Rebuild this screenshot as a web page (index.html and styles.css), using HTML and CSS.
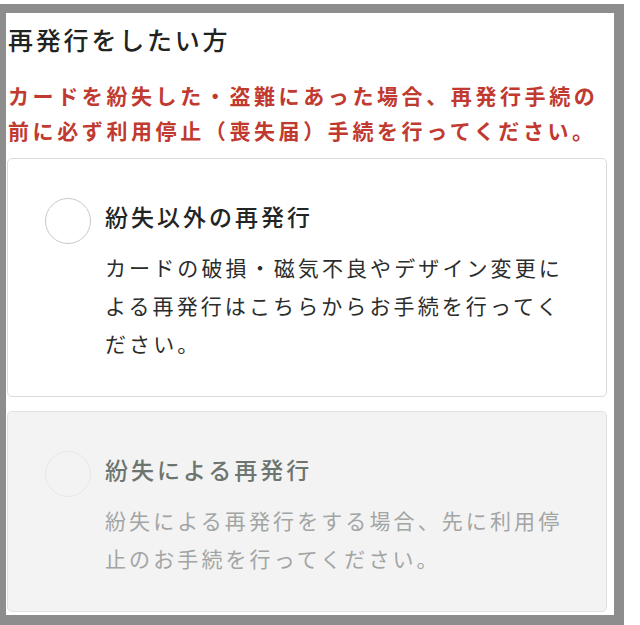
FILE: index.html
```html
<!DOCTYPE html>
<html lang="ja">
<head>
<meta charset="utf-8">
<title>再発行をしたい方</title>
<link rel="stylesheet" href="styles.css">
</head>
<body>
<div class="frame">
  <h2 class="title">再発行をしたい方</h2>
  <p class="warning">カードを紛失した・盗難にあった場合、再発行手続の前に必ず利用停止（喪失届）手続を行ってください。</p>
  <div class="options">
    <label class="card">
      <span class="radio"></span>
      <span class="card-text">
        <span class="card-title">紛失以外の再発行</span>
        <span class="card-desc">カードの破損・磁気不良やデザイン変更による再発行はこちらからお手続を行ってください。</span>
      </span>
    </label>
    <label class="card card-disabled">
      <span class="radio"></span>
      <span class="card-text">
        <span class="card-title">紛失による再発行</span>
        <span class="card-desc">紛失による再発行をする場合、先に利用停止のお手続を行ってください。</span>
      </span>
    </label>
  </div>
</div>
</body>
</html>
```

FILE: styles.css
```css
html, body {
  margin: 0;
  padding: 0;
  background: #ffffff;
}

body {
  font-family: "Noto Sans CJK JP", "Noto Sans", sans-serif;
  color: #222222;
}

.frame {
  margin-top: 4px;
  width: 608px;
  height: 602px;
  border-style: solid;
  border-color: #8d8d8d;
  border-width: 9px 10px 10px 6px;
  overflow: hidden;
  background: #ffffff;
}

.title {
  margin: 6px 0 0 2px;
  font-size: 25px;
  line-height: 40px;
  font-weight: 500;
  letter-spacing: 2.8px;
  color: #1f2322;
}

.warning {
  margin: 19px 0 0 2px;
  font-size: 21px;
  line-height: 35px;
  font-weight: 700;
  letter-spacing: 3.6px;
  color: #c03a30;
}

.options {
  display: flex;
  flex-direction: column;
  gap: 14px;
  margin: 10px 0 0 1px;
  width: 600px;
}

.card {
  display: flex;
  align-items: flex-start;
  gap: 14px;
  padding: 38px 28px 34px 37px;
  border: 1px solid #dadcdb;
  border-radius: 5px;
  background: #ffffff;
}

.radio {
  flex: 0 0 auto;
  width: 44px;
  height: 44px;
  margin-top: 1px;
  border: 1.5px solid #c6cac9;
  border-radius: 50%;
  background: #ffffff;
}

.card-text {
  display: flex;
  flex-direction: column;
}

.card-title {
  font-size: 23px;
  line-height: 38px;
  font-weight: 500;
  letter-spacing: 3px;
  color: #222524;
}

.card-desc {
  margin-top: 13px;
  font-size: 21px;
  line-height: 38px;
  letter-spacing: 3.1px;
  color: #2b2d2c;
}

.card-disabled {
  background: #f3f3f3;
  border-color: #e0e1e0;
}

.card-disabled .radio {
  background: #f3f3f3;
  border-color: #e6e7e6;
}

.card-disabled .card-title {
  color: #6c7570;
}

.card-disabled .card-desc {
  color: #a2a5a4;
}
```
